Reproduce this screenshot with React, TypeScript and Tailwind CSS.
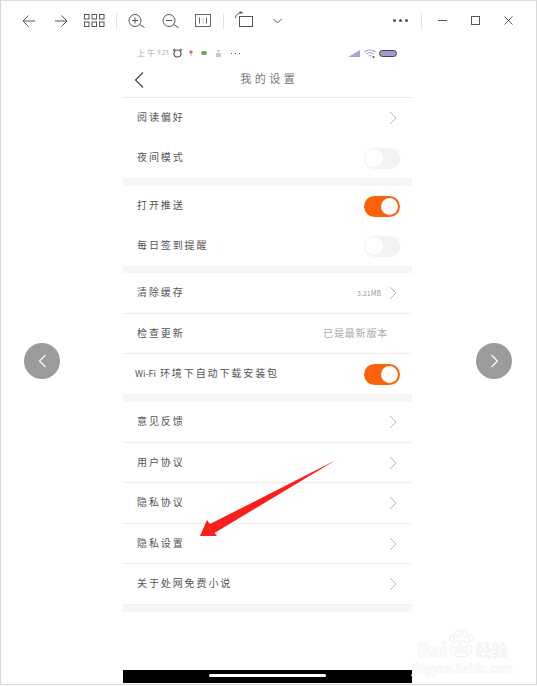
const font = "font-['Noto_Sans_CJK_SC','Liberation_Sans',sans-serif]";

function Chevron({ className = "" }: { className?: string }) {
  return (
    <svg width="8" height="14" viewBox="0 0 8 14" fill="none" className={className}>
      <path d="M1 1l6 6-6 6" stroke="#b8b8b8" strokeWidth="1" />
    </svg>
  );
}

function Toggle({ on }: { on?: boolean }) {
  return on ? (
    <div className="flex h-[21px] w-[36px] items-center justify-end rounded-full bg-[#fb6209] pr-[2px]">
      <div className="h-[17px] w-[17px] rounded-full bg-white" />
    </div>
  ) : (
    <div className="flex h-[21px] w-[36px] items-center rounded-full bg-[#f3f3f3] pl-[1px]">
      <div className="h-[18px] w-[18px] rounded-full bg-white" />
    </div>
  );
}

function Row({
  label,
  h,
  right,
  border,
}: {
  label: React.ReactNode;
  h: string;
  right?: React.ReactNode;
  border?: boolean;
}) {
  return (
    <div className={`flex items-center justify-between pl-[14px] pr-[12px] ${h} ${border ? "border-b border-[#eeeeee]" : ""}`}>
      <span className="mb-[2px] text-[10px] leading-none tracking-[1.9px] text-[#555]">{label}</span>
      {right ?? <Chevron className="mr-[3px]" />}
    </div>
  );
}

const Sep = ({ h }: { h: string }) => <div className={`${h} bg-[#f6f6f6]`} />;

const Divider = ({ className = "" }: { className?: string }) => <div className={`h-[16px] w-px bg-[#e2e2e2] ${className}`} />;

function SideButton({ side }: { side: "l" | "r" }) {
  return (
    <div
      className={`absolute top-[342px] flex h-[36px] w-[36px] items-center justify-center rounded-full bg-[#9b9b9b] ${
        side === "l" ? "left-[23px]" : "left-[475px]"
      }`}
    >
      <svg width="9" height="14" viewBox="0 0 9 14" fill="none">
        <path d={side === "l" ? "M7.500 1L1.500 7l6 6" : "M1.500 1l6 6-6 6"} stroke="#fff" strokeWidth="1.1" />
      </svg>
    </div>
  );
}

export default function App() {
  return (
    <div className={`relative h-[685px] w-[537px] overflow-hidden border-x border-b border-t border-x-[#d8d8d8] border-b-[#d8d8d8] border-t-[#cfe3ee] bg-white ${font}`}>
      <div className="flex h-[39px] items-center pl-[21px] pr-[23px]">
        <svg width="13" height="12" viewBox="0 0 13 12" fill="none" stroke="#555" strokeWidth="1">
          <path d="M13 6H1M6.500 .5L1 6l5.500 5.500" />
        </svg>
        <svg width="13" height="12" viewBox="0 0 13 12" fill="none" stroke="#555" strokeWidth="1" className="ml-[20px]">
          <path d="M0 6h12M6.500 .5L12 6l-5.500 5.500" />
        </svg>
        <svg width="21" height="13" viewBox="0 0 21 13" fill="none" stroke="#555" strokeWidth="1" className="ml-[16px]">
          <rect x=".5" y=".5" width="4.500" height="4.500" />
          <rect x="8" y=".5" width="4.500" height="4.500" />
          <rect x="15.500" y=".5" width="4.500" height="4.500" />
          <rect x=".5" y="8" width="4.500" height="4.500" />
          <rect x="8" y="8" width="4.500" height="4.500" />
          <rect x="15.500" y="8" width="4.500" height="4.500" />
        </svg>
        <Divider className="ml-[11px]" />
        <svg width="17" height="14" viewBox="0 0 17 14" fill="none" stroke="#555" strokeWidth="1" className="ml-[11px]">
          <circle cx="7" cy="6.500" r="6" />
          <path d="M11.500 10.500l5 3M4 6.500h6M7 3.500v6" />
        </svg>
        <svg width="17" height="14" viewBox="0 0 17 14" fill="none" stroke="#555" strokeWidth="1" className="ml-[17px]">
          <circle cx="7" cy="6.500" r="6" />
          <path d="M11.500 10.500l5 3M4 6.500h6" />
        </svg>
        <svg width="16" height="13" viewBox="0 0 16 13" fill="none" stroke="#666" strokeWidth="1" className="ml-[16px]">
          <rect x=".5" y=".5" width="15" height="12" />
          <path d="M4.500 3.500v6M8 4.500v1M8 7.500v1M11.500 3.500v6" />
        </svg>
        <Divider className="ml-[12px]" />
        <svg width="18" height="16" viewBox="0 0 18 16" fill="none" stroke="#555" strokeWidth="1" className="ml-[11px] mb-[3px]">
          <rect x="4.500" y="5.500" width="13" height="10" />
          <path d="M.5 7C.5 4 3 2 6.500 2" />
          <path d="M7.500 2L4.500 1" strokeWidth="1.500" />
        </svg>
        <svg width="9" height="6" viewBox="0 0 9 6" fill="none" stroke="#555" strokeWidth="1" className="ml-[20px]">
          <path d="M.5 1l4 4 4-4" />
        </svg>
        <div className="ml-auto flex w-[15px] items-center justify-between">
          <div className="h-[3px] w-[3px] rounded-full bg-[#555]" />
          <div className="h-[3px] w-[3px] rounded-full bg-[#555]" />
          <div className="h-[3px] w-[3px] rounded-full bg-[#555]" />
        </div>
        <Divider className="ml-[13px]" />
        <div className="ml-[16px] h-px w-[9px] bg-[#555]" />
        <div className="ml-[24px] h-[9px] w-[9px] border border-[#555]" />
        <svg width="9" height="9" viewBox="0 0 9 9" fill="none" stroke="#555" strokeWidth="1" className="ml-[24px]">
          <path d="M.5 .5l8 8M8.500 .5l-8 8" />
        </svg>
      </div>

      <div className="ml-[122px] flex w-[289px] flex-col">
        <div className="flex h-[19px] items-center pl-[14px] pr-[15px] pt-[7px]">
          <span className="text-[8px] leading-none tracking-[2px] text-[#aaa]">上午</span>
          <span className="text-[6px] leading-none text-[#aaa]">9:23</span>
          <svg width="11" height="10" viewBox="0 0 11 10" fill="none" stroke="#555" strokeWidth="1.200" className="ml-[3px]">
            <circle cx="5.500" cy="5.500" r="3.500" />
            <path d="M1 2.500L3 1M10 2.500L8 1" />
          </svg>
          <svg width="4" height="6" viewBox="0 0 4 6" className="ml-[6px]">
            <circle cx="2" cy="2" r="1.700" fill="#c97a6a" />
            <path d="M2 3v3" stroke="#c9a090" strokeWidth=".8" />
          </svg>
          <div className="ml-[8px] h-[4px] w-[6px] rounded-full bg-[#6fae4f]" />
          <svg width="5" height="7" viewBox="0 0 5 7" className="ml-[9px]">
            <rect x="1.500" y="0" width="2" height="2" fill="#d0b8b0" />
            <rect x="0" y="3" width="5" height="4" fill="#b9cbe0" />
          </svg>
          <div className="ml-[10px] flex w-[9px] justify-between">
            <div className="h-px w-px bg-[#555]" />
            <div className="h-px w-px bg-[#555]" />
            <div className="h-px w-px bg-[#555]" />
          </div>
          <svg width="12" height="7" viewBox="0 0 12 7" className="ml-auto">
            <path d="M0 7L12 0v7z" fill="#b3a2cf" />
          </svg>
          <svg width="12" height="9" viewBox="0 0 12 9" fill="none" stroke="#b3a2cf" strokeWidth="1.100" className="ml-[4px]">
            <path d="M.5 3c3-2.600 8-2.600 11 0M2.500 5c2-1.600 5-1.600 7 0M4.500 7c.8-.5 2.200-.5 3 0" />
            <circle cx="9.500" cy="8" r="1" fill="#555" stroke="none" />
          </svg>
          <div className="ml-[3px] h-[7px] w-[18px] rounded-full border border-[#444] bg-[#a898cf]" />
        </div>
        <div className="grid h-[39px] grid-cols-[1fr_auto_1fr] items-center border-b border-[#eaeaea]">
          <svg width="10" height="16" viewBox="0 0 10 16" fill="none" stroke="#444" strokeWidth="1.200" className="ml-[11px] mt-[3px]">
            <path d="M9 .5L1.500 8 9 15.500" />
          </svg>
          <span className="pl-[3.5px] pt-[1px] text-[11px] leading-none tracking-[3.5px] text-[#777]">我的设置</span>
        </div>

        <Row label="阅读偏好" h="h-[40px]" />
        <Row label="夜间模式" h="h-[40px]" right={<Toggle />} />
        <Sep h="h-[8px]" />
        <Row label="打开推送" h="h-[40px]" right={<Toggle on />} />
        <Row label="每日签到提醒" h="h-[40px]" right={<Toggle />} />
        <Sep h="h-[7px]" />
        <Row
          label="清除缓存"
          h="h-[41px]"
          border
          right={
            <div className="mr-[3px] flex items-center gap-[8px]">
              <span className="text-[7px] leading-none text-[#999]">3.21MB</span>
              <Chevron />
            </div>
          }
        />
        <Row
          label="检查更新"
          h="h-[40px]"
          border
          right={<span className="mb-[2px] mr-[12px] text-[10px] leading-none tracking-[0.8px] text-[#aaa]">已是最新版本</span>}
        />
        <Row
          label={
            <span className="-ml-[2px]">
              <span className="mr-[4px] text-[9px] tracking-normal">Wi-Fi</span>环境下自动下载安装包
            </span>
          }
          h="h-[40px]"
          right={<Toggle on />}
        />
        <Sep h="h-[8px]" />
        <Row label="意见反馈" h="h-[41px]" border />
        <Row label="用户协议" h="h-[40px]" border />
        <Row label="隐私协议" h="h-[41px]" border />
        <Row label="隐私设置" h="h-[40px]" border />
        <Row label="关于处网免费小说" h="h-[41px]" border />
        <Sep h="h-[7px]" />
        <div className="h-[58px]" />
        <div className="flex h-[13px] items-start justify-center bg-black pt-[4px]">
          <div className="h-[3px] w-[117px] rounded-full bg-white" />
        </div>
      </div>

      <SideButton side="l" />
      <SideButton side="r" />

      <svg width="140" height="80" viewBox="0 0 140 80" className="absolute left-[197px] top-[457px]">
        <path d="M138 2L12 66 9 62 2 78h17l-2.500-3z" fill="#fb1f1b" />
      </svg>

      <div className="absolute left-[411px] top-[626px] flex flex-col items-center">
        <div className="flex h-[31px] items-end text-white [-webkit-text-stroke:0.6px_#efefef]">
          <span className="text-[19px] font-bold leading-[18px]">Bai</span>
          <div className="relative h-[30px] w-[28px]">
            <svg width="28" height="30" viewBox="0 0 28 30" fill="none" stroke="#efefef" strokeWidth="1">
              <ellipse cx="5" cy="10" rx="2.500" ry="3.500" />
              <ellipse cx="11" cy="5" rx="2.500" ry="3.500" />
              <ellipse cx="18" cy="5" rx="2.500" ry="3.500" />
              <ellipse cx="24" cy="10" rx="2.500" ry="3.500" />
              <ellipse cx="14" cy="21" rx="11" ry="8" />
            </svg>
            <span className="absolute left-[6px] top-[14px] text-[12px] font-bold leading-none">du</span>
          </div>
          <span className="text-[16px] leading-[18px]">经验</span>
        </div>
        <span className="mt-[5px] text-[11px] font-bold leading-none text-white [-webkit-text-stroke:0.4px_#efefef]">jingyan.baidu.com</span>
      </div>
    </div>
  );
}
